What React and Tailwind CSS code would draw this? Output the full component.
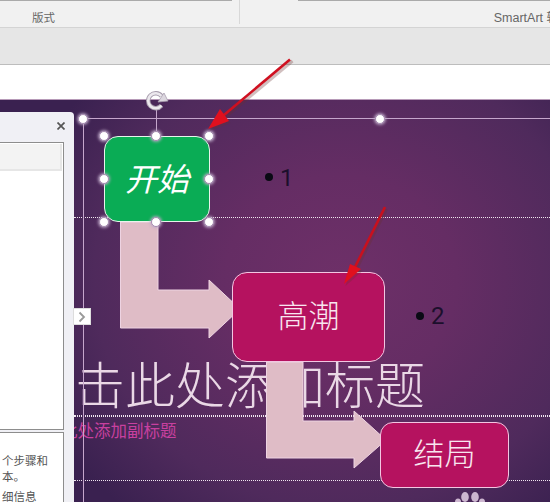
const cjk = { fontFamily: '"Noto Sans CJK SC", "Liberation Sans", sans-serif' };
const latin = { fontFamily: 'Roboto, "Liberation Sans", sans-serif' };

const handleClasses = [
  "left-[78px] top-[14px]",
  "left-[375px] top-[14px]",
  "left-[99px] top-[31px]",
  "left-[151px] top-[31px]",
  "left-[204px] top-[31px]",
  "left-[99px] top-[74px]",
  "left-[204px] top-[74px]",
  "left-[99px] top-[117px]",
  "left-[151px] top-[117px]",
  "left-[204px] top-[117px]",
];

function Handle({ className }) {
  return (
    <div
      className={`absolute z-30 h-[10px] w-[10px] rounded-full border border-[#a58ab0] bg-white shadow-[0_0_3px_1px_rgba(190,170,200,0.9)] ${className}`}
    />
  );
}

function Ribbon() {
  return (
    <div className="relative flex h-[28px] shrink-0 items-center justify-between border-b border-[#d4d4d4] bg-[#f1f1f1] text-[#666]">
      <span className="ml-[32px] mt-[9px] text-[11.5px]">版式</span>
      <div className="absolute left-0 top-0 h-px w-[232px] bg-[#aaa]" />
      <div className="absolute left-[239px] top-0 h-[24px] w-px bg-[#d8d8d8]" />
      <div className="absolute right-0 top-0 h-px w-[252px] bg-[#aaa]" />
      <span className="mr-[-9px] mt-[9px] whitespace-nowrap text-[12.5px]" style={{ fontFamily: '"Liberation Sans", "Noto Sans CJK SC", sans-serif' }}>
        SmartArt 转
      </span>
    </div>
  );
}

function SidePanel() {
  return (
    <div className="absolute bottom-0 left-0 top-[12px] z-40 flex w-[74px] flex-col rounded-tr-[4px] bg-[#f0f0f5]">
      <div className="flex h-[30px] shrink-0 items-start justify-end pr-[9px] pt-[10px]">
        <svg width="8" height="8" viewBox="0 0 8 8">
          <path d="M0.5 0.5 L7.5 7.5 M7.5 0.5 L0.5 7.5" stroke="#555" strokeWidth="1.7" />
        </svg>
      </div>
      <div className="mr-[10px] h-[288px] shrink-0 border-r border-b border-t border-[#8d8d8d] bg-white">
        <div className="mr-px mt-px h-[27px] border-b-2 border-r-2 border-[#e6e6e6] bg-[#f3f3f3]" />
      </div>
      <div className="mr-[10px] mt-[2px] flex-1 overflow-hidden border-r border-t border-[#8d8d8d] bg-white pl-[2px] pt-[19px] text-[11.5px] leading-[16px] text-[#555]">
        <div className="whitespace-nowrap">个步骤和</div>
        <div className="whitespace-nowrap">本。</div>
        <div className="mt-[4px] whitespace-nowrap">细信息</div>
      </div>
    </div>
  );
}

function FlowArrows() {
  return (
    <svg className="absolute left-0 top-0 z-10" width="550" height="402" viewBox="0 0 550 402">
      <path
        d="M120.5 122 H158 V190 H209 V180 L240 209 L209 238 V228 H120.5 Z"
        fill="#dfbcc6"
        stroke="#eed3e2"
        strokeWidth="1"
      />
      <path
        d="M266.5 262 H303 V321 H354 V311 L386 340 L354 368 V358 H266.5 Z"
        fill="#dfbcc6"
        stroke="#eed3e2"
        strokeWidth="1"
      />
    </svg>
  );
}

function RedArrows() {
  return (
    <svg className="absolute left-0 top-[-101px] z-50" width="550" height="502" viewBox="0 0 550 502">
      <g opacity="0.3" transform="translate(1.5 2)">
        <path d="M291 60 L224 116" stroke="#6b3030" strokeWidth="3" fill="none" />
        <path d="M208 130 L220 110 L229 122 Z" fill="#6b3030" />
        <path d="M385 208 L355 268" stroke="#6b3030" strokeWidth="3" fill="none" />
        <path d="M344 285 L350 265 L361 270 Z" fill="#6b3030" />
      </g>
      <path d="M290 60.5 L224 116" stroke="#cf1020" strokeWidth="2.6" fill="none" />
      <path d="M208 130 L220 110 L229 122 Z" fill="#e0101e" />
      <path d="M385 208 L355 268" stroke="#c8101e" strokeWidth="2.6" fill="none" />
      <path d="M344 285 L350 265 L361 270 Z" fill="#e0101e" />
    </svg>
  );
}

function RotateIcon() {
  return (
    <svg className="absolute left-[145px] top-[-10px] z-30" width="26" height="22" viewBox="0 0 26 22">
      <path d="M16.5 15.5 A7.5 7.5 0 1 1 16.5 6" fill="none" stroke="#a89eae" strokeWidth="4.4" />
      <path d="M16.5 15.5 A7.5 7.5 0 1 1 16.5 6" fill="none" stroke="#ebe8ed" strokeWidth="2.6" />
      <path d="M13 12 L23 11 L19 3 Z" fill="#dcd7df" stroke="#a89eae" strokeWidth="0.8" />
    </svg>
  );
}

function Slide() {
  return (
    <div className="relative flex-1 border-t border-[#b79ab8] bg-[radial-gradient(ellipse_60%_75%_at_62%_45%,#6e3068_0%,#652d64_35%,#4f2a5c_75%,#3a2150_100%)]">
      <div className="absolute left-[25px] top-[253px] z-0 whitespace-nowrap text-[50px] font-light leading-[58px] text-[#ead8e6]">
        单击此处添加标题
      </div>
      <div className="absolute left-[28px] top-[318px] z-0 whitespace-nowrap text-[16.5px] leading-[24px] text-[#c8409f]">
        单击此处添加副标题
      </div>

      <div className="absolute left-[74px] right-0 top-[117px] border-t border-dotted border-[#f0e6f0]" />
      <div className="absolute left-[74px] right-0 top-[315px] border-t border-dotted border-[#f0e6f0]" />
      <div className="absolute left-[74px] right-0 top-[316px] border-t border-dotted border-[#f0e6f0]" />
      <div className="absolute left-[74px] right-0 top-[380px] border-t border-dotted border-[#f0e6f0]" />

      <div className="absolute left-[83px] right-0 top-[18px] h-px bg-[#c5a6cc]" />
      <div className="absolute bottom-0 left-[83px] top-[18px] w-px bg-[#c5a6cc]" />
      <div className="absolute left-[156px] top-[10px] h-[26px] w-px bg-[#c5a6cc]" />

      <FlowArrows />

      <div className="absolute left-[104px] top-[36px] z-20 flex h-[86px] w-[106px] items-center justify-center rounded-[14px] border border-[#e8f5ec] bg-[#0aac55] pb-[4px] text-[32px] italic text-white">
        开始
      </div>
      <div className="absolute left-[232px] top-[172px] z-20 flex h-[90px] w-[153px] items-center justify-center rounded-[15px] border border-[#f3c6e2] bg-[#b5125f] pb-[5px] text-[31px] font-light text-[#f8e6f0]">
        高潮
      </div>
      <div className="absolute left-[380px] top-[322px] z-20 flex h-[66px] w-[129px] items-center justify-center rounded-[13px] border border-[#f3c6e2] bg-[#b5125f] pb-[5px] text-[31px] font-light text-[#f8e6f0]">
        结局
      </div>

      <div className="absolute left-[265px] top-[73px] h-[8px] w-[8px] rounded-full bg-[#0a0a14]" />
      <div className="absolute left-[280px] top-[63px] text-[24px] leading-[30px] text-[#1c0f2c]" style={latin}>
        1
      </div>
      <div className="absolute left-[416px] top-[212px] h-[8px] w-[8px] rounded-full bg-[#0a0a14]" />
      <div className="absolute left-[431px] top-[201px] text-[24px] leading-[30px] text-[#1c0f2c]" style={latin}>
        2
      </div>

      <svg className="absolute left-[450px] top-[388px]" width="40" height="14" viewBox="0 0 40 14">
        <ellipse cx="15" cy="9" rx="3.8" ry="5" fill="#cdb6d0" />
        <ellipse cx="25" cy="9" rx="3.8" ry="5" fill="#cdb6d0" />
        <ellipse cx="8" cy="14" rx="3" ry="3.5" fill="#cdb6d0" />
        <ellipse cx="32" cy="14" rx="3" ry="3.5" fill="#cdb6d0" />
      </svg>

      <RotateIcon />
      {handleClasses.map((c) => (
        <Handle key={c} className={c} />
      ))}

      <SidePanel />
      <div className="absolute left-[73px] top-[208px] z-40 flex h-[17px] w-[18px] items-center justify-center border border-[#ddd] bg-white">
        <svg width="8" height="12" viewBox="0 0 8 12">
          <path d="M1.5 1.5 L6 6 L1.5 10.5" fill="none" stroke="#999" strokeWidth="1.8" />
        </svg>
      </div>
      <RedArrows />
    </div>
  );
}

export default function App() {
  return (
    <div className="flex h-[502px] w-[550px] flex-col overflow-hidden bg-white" style={cjk}>
      <Ribbon />
      <div className="h-[37px] shrink-0 border-b border-[#bdbdbd] bg-[#e6e6e6]" />
      <div className="h-[34px] shrink-0 bg-white" />
      <Slide />
    </div>
  );
}
